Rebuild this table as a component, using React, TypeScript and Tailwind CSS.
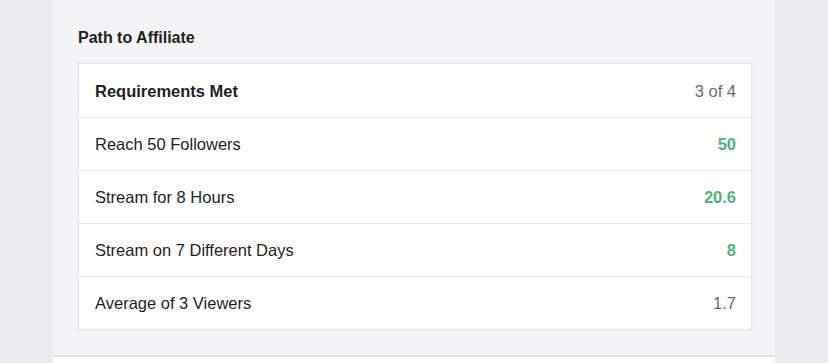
const requirements = [
  { label: 'Reach 50 Followers', value: '50', met: true },
  { label: 'Stream for 8 Hours', value: '20.6', met: true },
  { label: 'Stream on 7 Different Days', value: '8', met: true },
  { label: 'Average of 3 Viewers', value: '1.7', met: false },
];

export default function App() {
  return (
    <div
      className="h-[363px] w-full overflow-hidden bg-[#ebebee] text-[#1f1f23]"
      style={{ fontFamily: '"Liberation Sans", Arial, sans-serif' }}
    >
      <div className="ml-[53px] w-[722px]">
        {/* Path to Affiliate panel */}
        <section className="border-b-2 border-[#e3e3e6] bg-[#f4f4f6] pb-[25px] pl-[25px] pr-[23px] pt-[28px]">
          <h2 className="text-[16px] font-bold leading-[20px]">Path to Affiliate</h2>
          <div className="mt-[15px] border border-[#e4e4e7] bg-white shadow-[0_0_0_1px_#f0f0f2]">
            <div className="flex h-[53px] items-center justify-between pl-[16px] pr-[15px]">
              <span className="pt-[1px] text-[16.5px] font-bold">Requirements Met</span>
              <span className="pt-[1px] text-[16.5px] text-[#6b6b71]">3 of 4</span>
            </div>
            {requirements.map((r) => (
              <div
                key={r.label}
                className="flex h-[53px] items-center justify-between border-t border-[#e8e8eb] pl-[16px] pr-[15px]"
              >
                <span className="pt-[1px] text-[16.5px]">{r.label}</span>
                <span
                  className={
                    r.met
                      ? 'pt-[1px] text-[16.5px] font-bold text-[#4fb277]'
                      : 'pt-[1px] text-[16.5px] text-[#6b6b71]'
                  }
                >
                  {r.value}
                </span>
              </div>
            ))}
          </div>
        </section>
        <div className="h-[40px] bg-white" />
      </div>
    </div>
  );
}
